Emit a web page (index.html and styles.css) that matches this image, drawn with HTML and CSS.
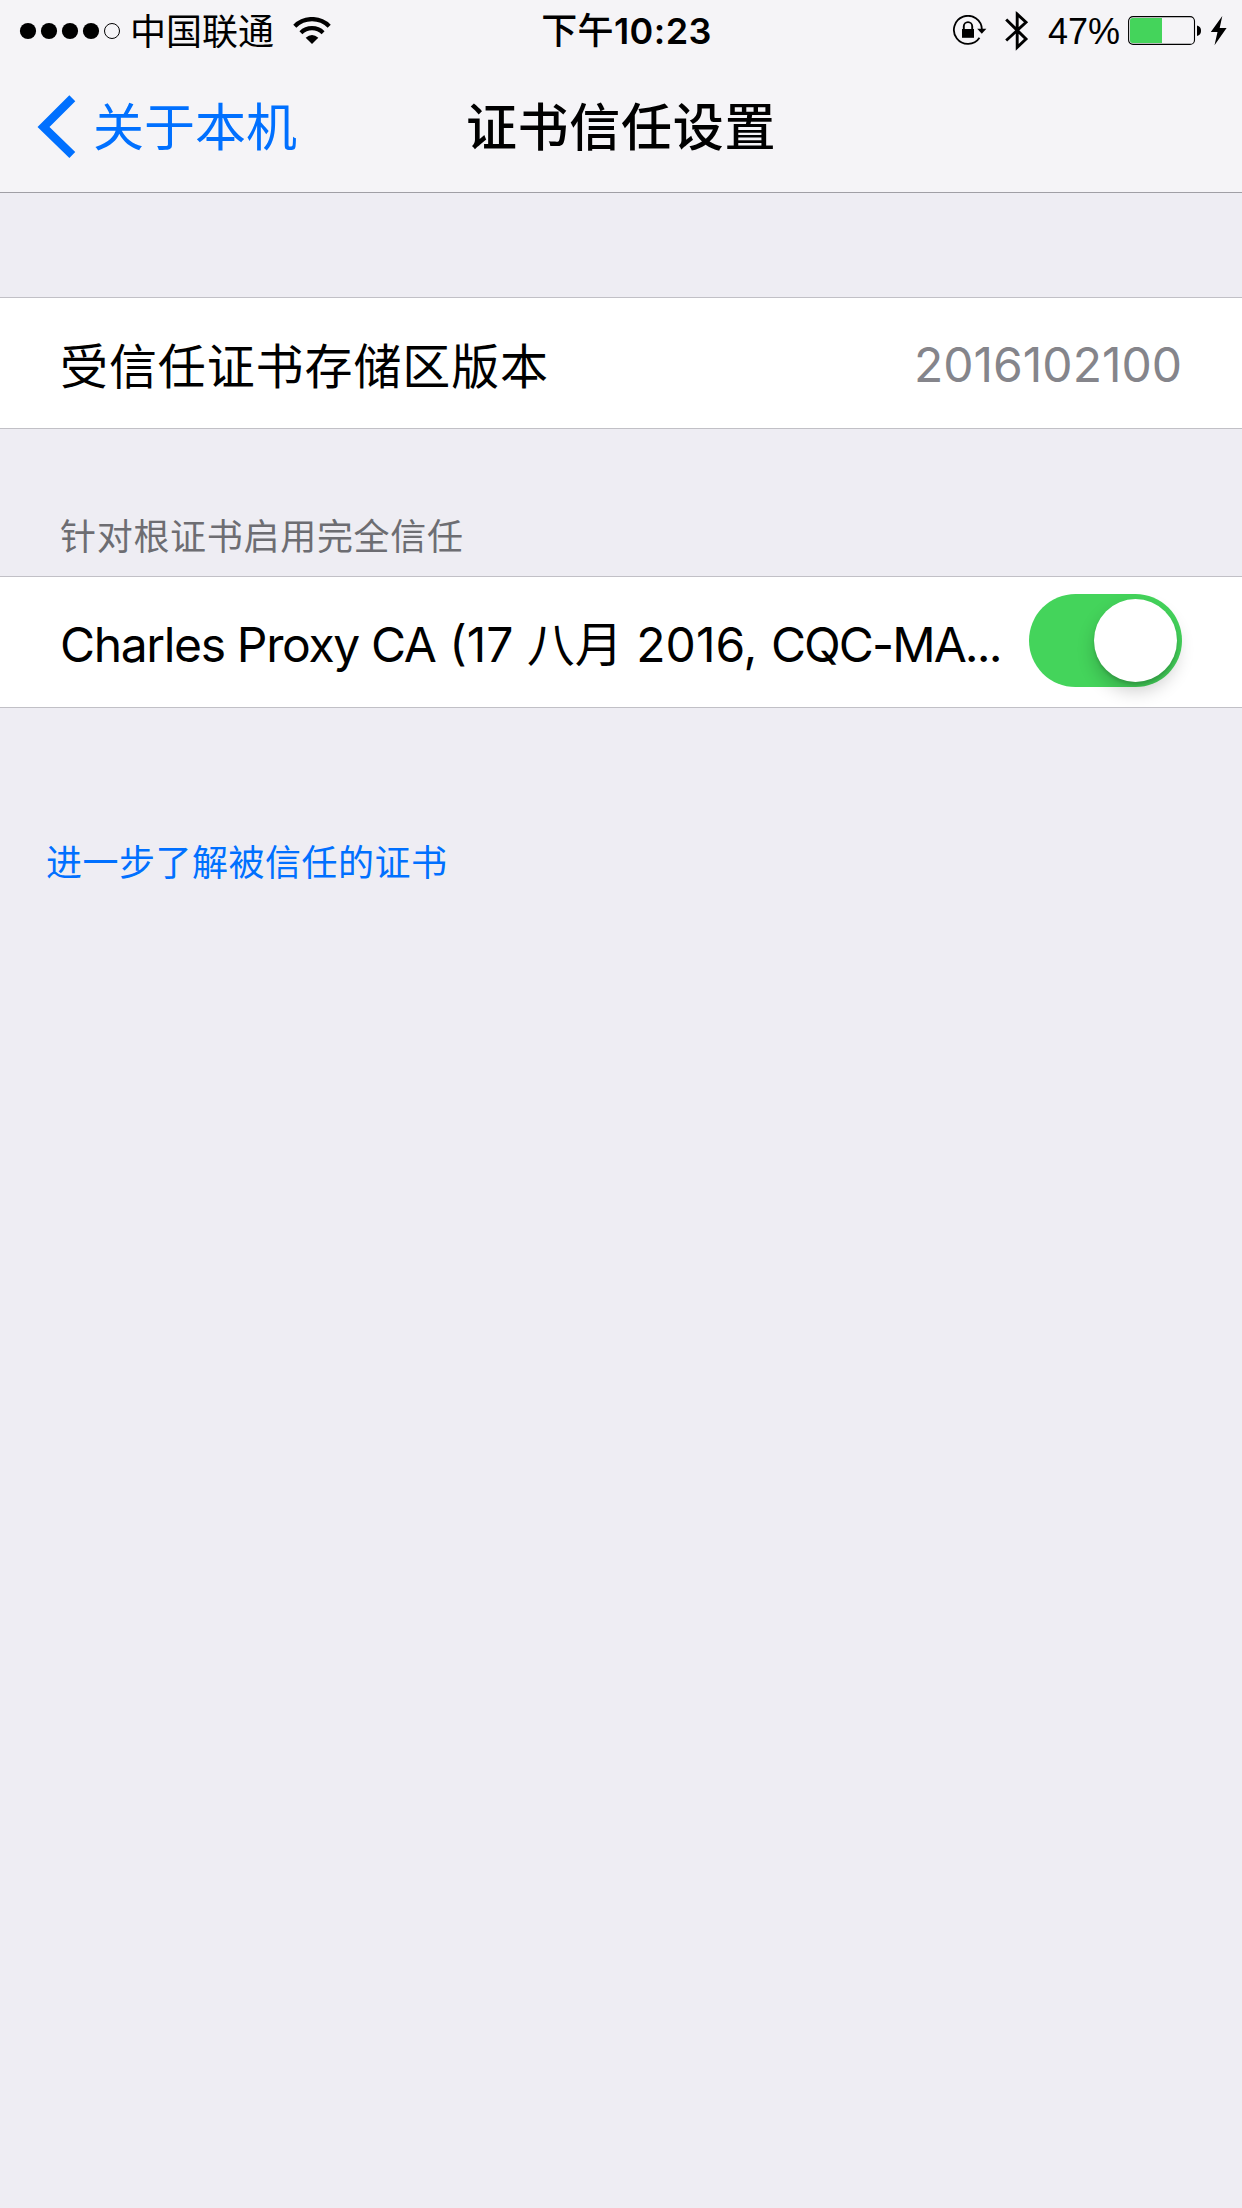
FILE: index.html
```html
<!DOCTYPE html>
<html lang="zh-CN">
<head>
<meta charset="utf-8">
<title>证书信任设置</title>
<link rel="stylesheet" href="styles.css">
</head>
<body>
<header class="top">
  <div class="status">
    <div class="status-left">
      <svg class="signal" width="102" height="18" viewBox="0 0 102 18">
        <circle cx="9" cy="9" r="8.1"/><circle cx="30" cy="9" r="8.1"/><circle cx="51" cy="9" r="8.1"/><circle cx="72" cy="9" r="8.1"/>
        <circle cx="93" cy="9" r="7.5" fill="none" stroke="#000"/>
      </svg>
      <span class="carrier">中国联通</span>
      <svg class="wifi" width="38" height="28" viewBox="0 0 38 28">
        <path d="M1.8 9.2A24.5 24.5 0 0 1 36.200 9.200" fill="none" stroke="#000" stroke-width="4.400"/>
        <path d="M7.900 15.700A16 16 0 0 1 30.100 15.700" fill="none" stroke="#000" stroke-width="4.200"/>
        <path d="M12.700 20.700Q19 15.300 25.300 20.700L19 27Z"/>
      </svg>
    </div>
    <div class="time"><span class="time-cjk">下午</span>10:23</div>
    <div class="status-right">
      <svg class="lock" width="36" height="32" viewBox="0 0 36 32">
        <path d="M27.500 22.700A14 14 0 1 1 29.900 14.500" fill="none" stroke="#000" stroke-width="1.800"/>
        <path d="M25.200 13.800H34.400L29.800 18.800Z"/>
        <path d="M10 14h12v8.800H10Z"/>
        <path d="M11.800 14.500V11.300a4.200 4.200 0 0 1 8.400 0V14.500" fill="none" stroke="#000" stroke-width="1.900"/>
      </svg>
      <svg class="bluetooth" width="24" height="42" viewBox="0 0 24 42">
        <path d="M1.200 9.500L21 29 12.200 37.300V4.200L21 12.300 1.200 30.500" fill="none" stroke="#000" stroke-width="2.900"/>
      </svg>
      <span class="percent">47%</span>
      <svg class="battery" width="74" height="30" viewBox="0 0 74 30">
        <rect x=".6" y=".6" width="65.900" height="27.800" rx="4.500" fill="none" stroke="#000" stroke-width="1.100"/>
        <path d="M4.500 2H34V27H4.500A2.500 2.500 0 0 1 2 24.500V4.500A2.500 2.500 0 0 1 4.500 2Z" fill="#44d45b"/>
        <path d="M69 9.500Q73 10.500 73 14.700T69 19.900Z"/>
      </svg>
      <svg class="bolt" width="18" height="30" viewBox="0 0 18 30">
        <path d="M12.300 0L.8 16H7.500L4.500 29.300 16.600 12H9.700Z"/>
      </svg>
    </div>
  </div>
  <nav class="nav">
    <a class="back">
      <svg class="chevron" width="40" height="64" viewBox="0 0 40 64">
        <path d="M35.300 3.200L6.500 32 35.300 60" fill="none" stroke="#0070ff" stroke-width="8.400"/>
      </svg>
      <span class="back-label">关于本机</span>
    </a>
    <h1 class="title">证书信任设置</h1>
  </nav>
</header>
<main class="content">
  <section class="row version">
    <span class="label">受信任证书存储区版本</span>
    <span class="value">2016102100</span>
  </section>
  <h2 class="section-title">针对根证书启用完全信任</h2>
  <section class="row cert">
    <span class="name"><span class="issuer">Charles Proxy CA</span> (17 八月 2016, <span class="host">CQC-MA...</span></span>
    <span class="switch"><span class="knob"></span></span>
  </section>
  <a class="more">进一步了解被信任的证书</a>
</main>
</body>
</html>
```

FILE: styles.css
```css
* { box-sizing: border-box; }
body {
  margin: 0;
  min-height: 2208px;
  background: #eeedf3;
  color: #000;
  font-family: Inter, "Noto Sans CJK SC", sans-serif;
}
svg { display: block; flex: none; }
.top {
  height: 193px;
  background: #f5f4f7;
  border-bottom: 1px solid #a09fa5;
}
.status {
  height: 60px;
  display: grid;
  grid-template-columns: 1fr auto 1fr;
  align-items: center;
  white-space: nowrap;
}
.status-left, .status-right { display: flex; align-items: center; height: 60px; }
.status-left { padding-left: 19px; }
.carrier { font-size: 36px; line-height: 60px; margin-left: 9px; padding-top: 2px; width: 144px; }
.wifi { margin-left: 19px; }
.time { font-size: 36px; line-height: 60px; font-weight: 600; padding: 1px 0 0 11px; letter-spacing: .4px; }
.time-cjk { font-weight: 500; }
.status-right { justify-content: flex-end; padding-right: 14px; }
.bluetooth { margin-left: 17px; }
.percent { font-family: "Liberation Sans", sans-serif; font-size: 36px; line-height: 60px; margin-left: 19px; padding-top: 2px; width: 71px; }
.battery { margin-left: 9px; }
.bolt { margin-left: 8px; }
.nav {
  height: 132px;
  padding-top: 2px;
  display: grid;
  grid-template-columns: 1fr auto 1fr;
  align-items: center;
}
.back { display: flex; align-items: center; padding-left: 37px; color: #0070ff; }
.back-label { font-size: 51px; line-height: 72px; margin-left: 16px; padding-top: 1px; }
.title { margin: 0; font-size: 51px; line-height: 72px; font-weight: 500; letter-spacing: .7px; padding-top: 1px; }
.content { padding-top: 104px; display: flex; flex-direction: column; }
.row {
  height: 132px;
  padding: 0 60px;
  background: #fff;
  border: solid #c1c0c6;
  border-width: 1px 0;
  display: flex;
  align-items: center;
  justify-content: space-between;
  font-size: 48px;
  white-space: nowrap;
}
.label { letter-spacing: .9px; margin-top: -1px; }
.value { color: #85858b; padding-top: 3px; }
.section-title {
  margin: 0;
  height: 147px;
  padding: 81px 60px 0;
  color: #6d6d72;
  font-size: 36px;
  line-height: 54px;
  font-weight: 400;
  letter-spacing: .7px;
}
.name { margin-top: -2px; }
.issuer { letter-spacing: -1.350px; }
.host { letter-spacing: -1.900px; }
.switch {
  flex: none;
  width: 153px;
  height: 93px;
  padding: 5px;
  border-radius: 47px;
  background: #44d45b;
  display: flex;
  justify-content: flex-end;
  margin-bottom: 4px;
}
.knob {
  width: 83px;
  height: 83px;
  border-radius: 50%;
  background: #fff;
  box-shadow: 0 9px 18px rgba(0, 0, 0, .2), 0 3px 3px rgba(0, 0, 0, .12);
}
.more {
  color: #0070ff;
  margin-top: 128px;
  padding-left: 46px;
  font-size: 36px;
  line-height: 54px;
  letter-spacing: .5px;
}
```
